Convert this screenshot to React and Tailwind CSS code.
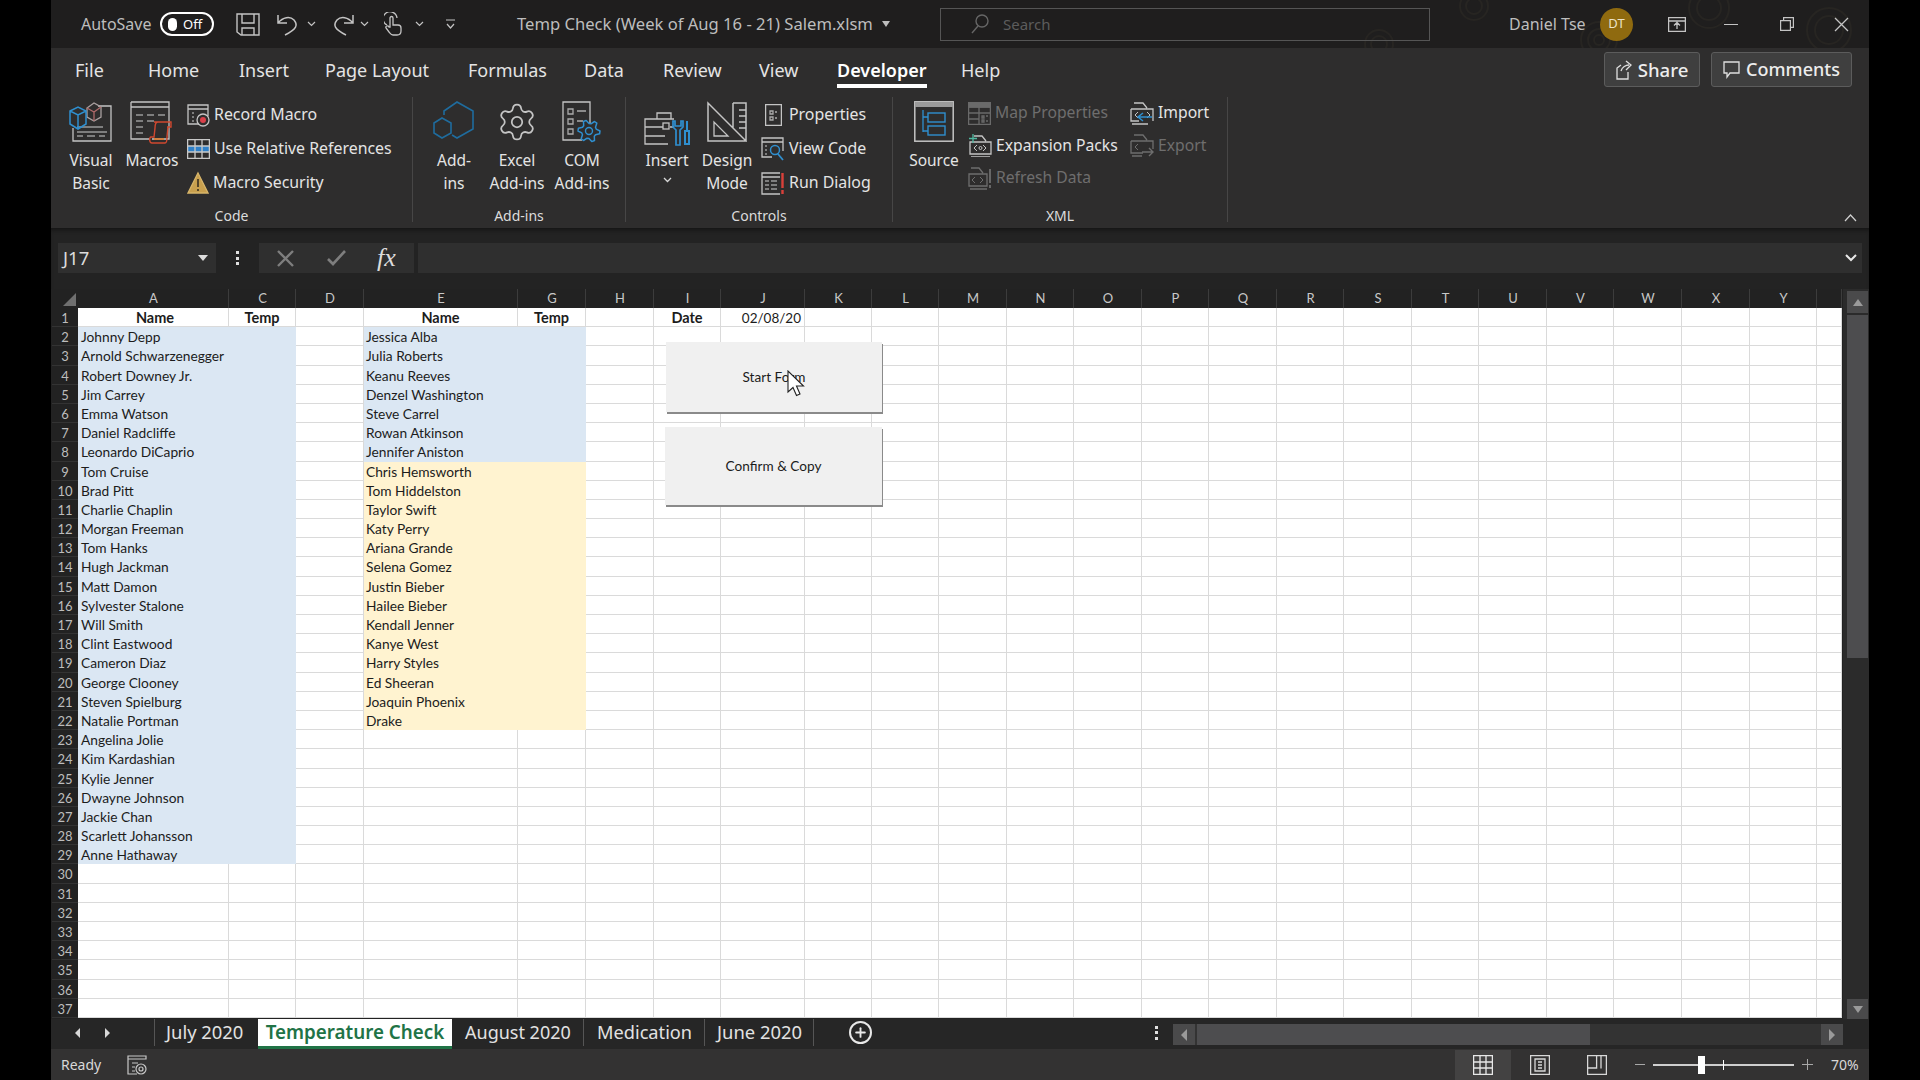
import React from 'react';
import { Settings, Plus } from 'lucide-react';

const UI = { fontFamily: '"Noto Sans", "Open Sans", sans-serif' };
const CELL = { fontFamily: 'Lato, "Liberation Sans", sans-serif' };

// gear outline, used for the small blue gear on COM Add-ins
function gearPath(cx, cy, r1, r2, teeth) {
  const pts = [];
  for (let i = 0; i < teeth * 4; i++) {
    const a = (i / (teeth * 4)) * Math.PI * 2;
    const r = i % 4 === 0 || i % 4 === 1 ? r2 : r1;
    pts.push(`${(cx + r * Math.cos(a)).toFixed(1)} ${(cy + r * Math.sin(a)).toFixed(1)}`);
  }
  return 'M' + pts.join('L') + 'Z';
}

const G = '#c4c4c4';
const B = '#2f8fcf';

function Ic({ w, h, children, className = '' }) {
  return (
    <svg width={w} height={h} viewBox={`0 0 ${w} ${h}`} fill="none" stroke={G} strokeWidth="1.3" className={'shrink-0 ' + className}>
      {children}
    </svg>
  );
}

const icons = {
  visualBasic: (
    <Ic w={44} h={42}>
      <path d="M29 5h13v35H4V27" />
      <path d="M8 26h14M22 26h12M8 31h30M8 35h6M18 35h8M30 35h6" stroke="#999" />
      <path d="M18 7l7-5 7 4v10l-7 4-7-4z" stroke="#a9a0a0" />
      <path d="M18 7l7 4 7-5M25 11v9" stroke="#b06a6a" />
      <path d="M1 10l8-4 8 4v13l-8 5-8-5z M1 10l8 4 8-4 M9 14v14" stroke={B} strokeWidth="1.5" />
    </Ic>
  ),
  macros: (
    <Ic w={44} h={43}>
      <path d="M1 1h38v37H22M1 1v37h18M1 6h38" />
      <path d="M6 14h7M17 14h7M28 14h7M6 20h7M17 20h7M6 26h7M6 32h7" stroke="#999" />
      <path d="M24 21h17v5h-4M28 21c-3 0-3 4-3 6l-1 9h-3c-2 0-2 6 1 6h13c2 0 2-5 2-6l1-10" stroke="#d0482f" strokeWidth="1.4" />
      <path d="M24 38h10" stroke="#d08040" strokeWidth="2" />
    </Ic>
  ),
  record: (
    <Ic w={23} h={23}>
      <path d="M12 20H1V1h20v11M1 5h20" />
      <path d="M5 9h2M5 13h2M5 17h2" stroke="#999" />
      <circle cx="16" cy="16" r="6" />
      <circle cx="16" cy="16" r="3" fill="#d9404a" stroke="none" />
    </Ic>
  ),
  relative: (
    <Ic w={23} h={20}>
      <rect x="0.5" y="7" width="22" height="6" fill="#2f80c8" stroke="none" />
      <path d="M.6.6h21.8v18.8H.6zM.6 7h21.8M.6 13h21.8M8 .6v18.8M15 .6v18.8" stroke="#c9c9c9" />
    </Ic>
  ),
  warning: (
    <Ic w={22} h={24}>
      <path d="M11 2L21 22H1z" fill="#c9a04e" stroke="#d8b56a" />
      <path d="M11 8v8M11 18v2" stroke="#3a3020" strokeWidth="1.6" />
    </Ic>
  ),
  addins: (
    <Ic w={42} h={38}>
      <path d="M11 14V10L24 1l16 9v18l-16 9-5-3" stroke="#1f6c9e" strokeWidth="1.6" />
      <path d="M9 17l9 5v10l-9 5-8-5V22z" stroke="#1f6c9e" strokeWidth="1.6" />
    </Ic>
  ),
  com: (
    <Ic w={40} h={42}>
      <path d="M28 22V1H1v38h19" />
      <path d="M6 8h5v5H6zM6 18h5v5H6zM6 28h5v5H6zM15 10h9M15 20h6" stroke="#aaa" />
      <path d={gearPath(27, 30, 7.5, 11, 6)} stroke={B} strokeWidth="1.5" strokeLinejoin="round" />
      <circle cx="27" cy="30" r="3.5" stroke={B} strokeWidth="1.4" />
    </Ic>
  ),
  insert: (
    <Ic w={46} h={38}>
      <path d="M30 11H1v17h20M1 19h18M26 19h4M13 11V5h14v6M1 28v8h23" />
      <rect x="19" y="15" width="6" height="6" />
      <path d="M29 13v6l3 3v15h4V22l3-3v-6l-2 0v5h-6v-5z" stroke={B} strokeWidth="1.7" />
      <path d="M43 13v10M41 23h4v13h-4z" stroke={B} strokeWidth="2" />
    </Ic>
  ),
  design: (
    <Ic w={40} h={41}>
      <path d="M1 2v38h38zM26 2h13v38M26 2v25" strokeWidth="1.5" />
      <path d="M7 21v14h14zM32 9h7M32 15h7M32 21h7M32 27h7" />
    </Ic>
  ),
  props: (
    <Ic w={17} h={22} className="mr-[3px]">
      <rect x=".6" y=".6" width="15.8" height="20.8" />
      <path d="M5 7h3v3H5zM5 13h3v3H5zM10 8h2M10 14h2" stroke="#aaa" />
    </Ic>
  ),
  viewCode: (
    <Ic w={24} h={24}>
      <path d="M11 20H1V1h21v13M1 5h21" />
      <path d="M4 9h2M4 13h2M4 17h2" stroke="#999" />
      <circle cx="14" cy="13" r="4.5" stroke={B} strokeWidth="1.5" />
      <path d="M17 17l5 6" stroke={B} strokeWidth="1.8" />
    </Ic>
  ),
  runDialog: (
    <Ic w={24} h={23}>
      <path d="M19 22H1V1h18M1 5h18" />
      <path d="M4 9h4M10 9h6M4 13h4M10 13h6M4 17h4M10 17h6" stroke="#999" />
      <path d="M21.5 1v15M21.5 18v4" stroke="#d9403a" strokeWidth="2.4" />
    </Ic>
  ),
  source: (
    <Ic w={40} h={41}>
      <rect x=".8" y=".8" width="38.4" height="39.4" strokeWidth="1.5" />
      <rect x="1" y="1" width="38" height="5" fill="#9a9a9a" stroke="none" />
      <path d="M9 9v22M9 16h5M9 30h5" stroke={B} />
      <rect x="14" y="12" width="17" height="9" stroke={B} strokeWidth="1.4" />
      <rect x="14" y="25" width="17" height="9" stroke={B} strokeWidth="1.4" />
    </Ic>
  ),
  mapProps: (
    <Ic w={23} h={23}>
      <g stroke="#6a6a6a">
        <path d="M.6.6h21.8v21.8H.6zM.6 5h21.8M.6 11h21.8M.6 17h10M11 5v17" />
        <path d="M14 14h2v2h-2zM14 18h2v2h-2zM18 14h2M18 19h2" />
        <rect x="1" y="1" width="21" height="4" fill="#6a6a6a" />
      </g>
    </Ic>
  ),
  expansion: (
    <Ic w={24} h={23}>
      <path d="M6 2h8l4 5M2 8h21v12H2zM3 23h19" />
      <path d="M9 11l-3 3 3 3M15 11l3 3-3 3" strokeWidth="1" />
      <circle cx="12.5" cy="14" r="1.5" strokeWidth="1" />
      <path d="M5 0v9M1 4.5h8" stroke="#4fb8a0" />
    </Ic>
  ),
  refresh: (
    <Ic w={24} h={24}>
      <g stroke="#6e6e6e">
        <path d="M3 2h8l4 5M1 8h18v12H1zM2 23h17" />
        <path d="M7 11l-3 3 3 3M12 11l3 3-3 3" strokeWidth="1" />
        <path d="M22 3v14M22 19v3" strokeWidth="1.8" />
      </g>
    </Ic>
  ),
  importIc: (
    <Ic w={24} h={23}>
      <path d="M4 1h9l4 5M1 7h22v12M1 7v12h8M2 22h16" />
      <path d="M8 10l-3 3 3 3M17 10l3 3-3 3" strokeWidth="1" />
      <path d="M22 15H9M13 11l-5 4 5 4" stroke={B} strokeWidth="1.5" />
    </Ic>
  ),
  exportIc: (
    <Ic w={24} h={23}>
      <g stroke="#6e6e6e">
        <path d="M4 1h9l4 5M1 7h22v8M1 7v12h12M2 22h10" />
        <path d="M8 10l-3 3 3 3" strokeWidth="1" />
        <path d="M12 18h11M19 14l4 4-4 4" strokeWidth="1.4" />
      </g>
    </Ic>
  ),
};

function LargeBtn({ icon, lines, width }) {
  return (
    <div className={'flex flex-col items-center shrink-0 ' + width}>
      <div className="h-[52px] pt-[4px] flex justify-center items-start">{icon}</div>
      {lines.map((l, i) => (
        <div key={i} className="h-[23px] leading-[23px] text-[15.5px] text-[#e4e4e4] whitespace-nowrap">{l}</div>
      ))}
    </div>
  );
}

function SmallBtn({ icon, label, dim, rowClass = 'h-[34px] text-[15.9px]' }) {
  return (
    <div className={'flex items-center gap-[4px] whitespace-nowrap ' + rowClass}>
      {icon}
      <span className={dim ? 'text-[#6e6e6e]' : 'text-[#e4e4e4]'}>{label}</span>
    </div>
  );
}

function Group({ width, label, children }) {
  return (
    <div className={'h-[125px] shrink-0 border-r border-[#474646] flex flex-col ' + width}>
      <div className="h-[109px] shrink-0 flex">{children}</div>
      <div className="h-[20px] shrink-0 leading-[20px] text-center text-[14px] text-[#dcdcdc]">{label}</div>
    </div>
  );
}

function TitleBar() {
  return (
    <div className="relative h-[48px] shrink-0 bg-[#1f1e1e] flex items-center text-[#bdbdbd] overflow-hidden">
      <svg className="absolute right-0 top-0" width="560" height="48" fill="none" stroke="#272522" strokeWidth="2">
        <circle cx="70" cy="44" r="14" /><circle cx="70" cy="44" r="8" />
        <circle cx="165" cy="6" r="14" /><circle cx="165" cy="6" r="8" />
        <circle cx="290" cy="40" r="18" /><circle cx="290" cy="40" r="11" /><circle cx="290" cy="40" r="5" />
        <circle cx="400" cy="8" r="20" /><circle cx="400" cy="8" r="12" />
        <circle cx="520" cy="30" r="22" /><circle cx="520" cy="30" r="14" />
      </svg>
      <span className="ml-[30px] w-[79px] text-[16px] shrink-0">AutoSave</span>
      <div className="w-[54px] h-[24px] rounded-full border-2 border-white flex items-center pl-[6px] gap-[6px] shrink-0">
        <span className="w-[9px] h-[13px] rounded-full bg-white" />
        <span className="text-[13px] text-white leading-none">Off</span>
      </div>
      <svg className="ml-[22px] shrink-0" width="24" height="23" fill="none" stroke={G} strokeWidth="1.4">
        <path d="M1 1h22v21H5l-4-3zM6 1v9h12V1M6 22v-7h12v7" />
      </svg>
      <svg className="ml-[17px] shrink-0" width="22" height="23" fill="none" stroke={G} strokeWidth="1.5">
        <path d="M1 2v8h9M1 10C6 4 13 3 17 7c4 5 3 9-9 15" />
      </svg>
      <svg className="ml-[8px] shrink-0" width="9" height="6" fill="none" stroke={G} strokeWidth="1.2"><path d="M1 1l3.5 3.5L8 1" /></svg>
      <svg className="ml-[16px] shrink-0" width="22" height="23" fill="none" stroke={G} strokeWidth="1.5">
        <path d="M21 2v8h-9M21 10C16 4 9 3 5 7c-4 5-3 9 9 15" />
      </svg>
      <svg className="ml-[6px] shrink-0" width="9" height="6" fill="none" stroke={G} strokeWidth="1.2"><path d="M1 1l3.5 3.5L8 1" /></svg>
      <svg className="ml-[15px] shrink-0" width="18" height="24" fill="none" stroke={G} strokeWidth="1.3">
        <path d="M3 13A7 7 0 1 1 13 6" />
        <path d="M6 15V6a1.5 1.5 0 0 1 3 0v7h5c2 0 3 1 3 3v3c0 3-2 4-4 4H9c-2 0-3-2-4-3l-3-4c-1-2 2-3 3-1z" />
      </svg>
      <svg className="ml-[13px] shrink-0" width="9" height="6" fill="none" stroke={G} strokeWidth="1.2"><path d="M1 1l3.5 3.5L8 1" /></svg>
      <svg className="ml-[21px] shrink-0" width="11" height="11" fill="none" stroke={G} strokeWidth="1.2"><path d="M1 1h9M2 5l3.5 4L9 5" /></svg>
      <span className="ml-[61px] w-[359px] text-[16.6px] whitespace-nowrap shrink-0">Temp Check (Week of Aug 16 - 21) Salem.xlsm</span>
      <span className="ml-[6px] w-0 h-0 border-x-[4px] border-x-transparent border-t-[6px] border-t-[#bdbdbd] shrink-0" />
      <div className="relative ml-[50px] w-[490px] h-[33px] border border-[#555] flex items-center shrink-0">
        <svg className="ml-[30px]" width="18" height="20" fill="none" stroke="#666" strokeWidth="1.4">
          <circle cx="11" cy="7" r="6" /><path d="M7 12l-6 7" />
        </svg>
        <span className="ml-[14px] text-[15px] text-[#5c5c5c]">Search</span>
      </div>
      <span className="relative ml-[79px] w-[91px] text-[16px] whitespace-nowrap shrink-0">Daniel Tse</span>
      <div className="relative w-[33px] h-[33px] rounded-full bg-[#8f6a0f] flex items-center justify-center text-[13px] text-[#ece3c8] shrink-0">DT</div>
      <svg className="relative ml-[35px] shrink-0" width="18" height="15" fill="none" stroke={G} strokeWidth="1.3">
        <path d="M.6.6h16.8v13.8H.6zM.6 4h16.8M9 12V6M6 8.5L9 5.5l3 3" />
      </svg>
      <span className="relative ml-[38px] w-[14px] h-[1px] bg-[#c4c4c4] shrink-0" />
      <svg className="relative ml-[42px] shrink-0" width="14" height="14" fill="none" stroke={G} strokeWidth="1.2">
        <path d="M.6 3.6h9.8v9.8H.6zM3.6 3.6V.6h9.8v9.8h-3" />
      </svg>
      <svg className="relative ml-[40px] shrink-0" width="15" height="15" fill="none" stroke={G} strokeWidth="1.3">
        <path d="M1 1l13 13M14 1L1 14" />
      </svg>
    </div>
  );
}

const tabs = [
  ['File', 'w-[73px]'], ['Home', 'w-[91px]'], ['Insert', 'w-[86px]'], ['Page Layout', 'w-[143px]'], ['Formulas', 'w-[116px]'],
  ['Data', 'w-[79px]'], ['Review', 'w-[96px]'], ['View', 'w-[78px]'], ['Developer', 'w-[124px]'], ['Help', 'w-[60px]'],
];

function TabRow() {
  return (
    <div className="relative h-[49px] shrink-0 flex items-start pl-[24px] pt-[10px]">
      {tabs.map(([t, w]) => (
        <div key={t} className={'shrink-0 ' + w}>
          {t === 'Developer' ? (
            <span className="inline-block h-[30px] leading-[25px] text-[18px] font-semibold text-white border-b-[4px] border-white">{t}</span>
          ) : (
            <span className="inline-block leading-[25px] text-[18px] text-[#e4e4e4]">{t}</span>
          )}
        </div>
      ))}
      <div className="absolute right-[17px] top-[4px] flex gap-[11px]">
        <div className="w-[96px] h-[35px] rounded-[3px] border border-[#5c5c5c] bg-[#3f3f3f] flex items-center justify-center gap-[5px] text-[18.6px] font-medium text-[#ededed]">
          <svg width="17" height="20" fill="none" stroke="#e0e0e0" strokeWidth="1.3"><path d="M5 11c1-4 5-6 8-6M10 1l5 4-5 5M12 12v7H1V8l4-3" /></svg>
          Share
        </div>
        <div className="w-[141px] h-[35px] rounded-[3px] border border-[#5c5c5c] bg-[#3f3f3f] flex items-center justify-center gap-[6px] text-[18px] font-medium text-[#ededed]">
          <svg width="17" height="18" fill="none" stroke="#e0e0e0" strokeWidth="1.3"><path d="M1 1h15v11H7l-3 4v-4H1z" /></svg>
          Comments
        </div>
      </div>
    </div>
  );
}

function Ribbon() {
  return (
    <div className="relative h-[131px] shrink-0 flex">
      <Group width="w-[362px]" label="Code">
        <div className="w-[11px] shrink-0" />
        <LargeBtn width="w-[58px]" icon={icons.visualBasic} lines={['Visual', 'Basic']} />
        <LargeBtn width="w-[64px]" icon={icons.macros} lines={['Macros']} />
        <div className="pl-[3px] pt-px">
          <SmallBtn icon={icons.record} label="Record Macro" />
          <SmallBtn icon={icons.relative} label="Use Relative References" />
          <SmallBtn icon={icons.warning} label="Macro Security" />
        </div>
      </Group>
      <Group width="w-[213px]" label="Add-ins">
        <div className="w-[12px] shrink-0" />
        <LargeBtn width="w-[58px]" icon={icons.addins} lines={['Add-', 'ins']} />
        <LargeBtn width="w-[68px]" icon={<Settings size={42} strokeWidth={1} color={G} />} lines={['Excel', 'Add-ins']} />
        <LargeBtn width="w-[62px]" icon={icons.com} lines={['COM', 'Add-ins']} />
      </Group>
      <Group width="w-[267px]" label="Controls">
        <div className="w-[14px] shrink-0" />
        <LargeBtn
          width="w-[54px]"
          icon={<div className="pt-[7px]">{icons.insert}</div>}
          lines={['Insert', <svg key="c" className="mt-[5px]" width="9" height="6" fill="none" stroke="#d8d8d8" strokeWidth="1.3"><path d="M1 1l3.5 3.5L8 1" /></svg>]}
        />
        <LargeBtn width="w-[66px]" icon={icons.design} lines={['Design', 'Mode']} />
        <div className="pl-px pt-px">
          <SmallBtn icon={icons.props} label="Properties" rowClass="h-[34px] pl-[4px] text-[15.9px]" />
          <SmallBtn icon={icons.viewCode} label="View Code" />
          <SmallBtn icon={icons.runDialog} label="Run Dialog" />
        </div>
      </Group>
      <Group width="w-[335px]" label="XML">
        <div className="w-[12px] shrink-0" />
        <LargeBtn width="w-[58px]" icon={icons.source} lines={['Source']} />
        <div className="pl-[5px] w-[167px] shrink-0">
          <SmallBtn rowClass="h-[32.5px] text-[15.7px]" icon={icons.mapProps} label="Map Properties" dim />
          <SmallBtn rowClass="h-[32.5px] text-[15.7px]" icon={icons.expansion} label="Expansion Packs" />
          <SmallBtn rowClass="h-[32.5px] text-[15.7px]" icon={icons.refresh} label="Refresh Data" dim />
        </div>
        <div>
          <SmallBtn rowClass="h-[32.5px] text-[15.7px]" icon={icons.importIc} label="Import" />
          <SmallBtn rowClass="h-[32.5px] text-[15.7px]" icon={icons.exportIc} label="Export" dim />
        </div>
      </Group>
      <svg className="absolute right-[12px] top-[117px]" width="13" height="8" fill="none" stroke="#d0d0d0" strokeWidth="1.2">
        <path d="M1 7l5.5-6L12 7" />
      </svg>
    </div>
  );
}

function FormulaBar() {
  return (
    <div className="h-[61px] shrink-0 bg-[#232323] shadow-[inset_0_4px_4px_-2px_#151515] pt-[15px] pl-[7px] flex items-start">
      <div className="w-[158px] h-[30px] bg-[#2f2f2f] flex items-center justify-between pl-[5px] pr-[8px] shrink-0">
        <span className="text-[18.5px] text-[#dcdcdc]">J17</span>
        <span className="w-0 h-0 border-x-[5px] border-x-transparent border-t-[6px] border-t-[#dcdcdc]" />
      </div>
      <div className="w-[43px] h-[30px] flex flex-col items-center justify-center gap-[2.5px] shrink-0">
        <span className="w-[3px] h-[3px] bg-[#e0e0e0]" /><span className="w-[3px] h-[3px] bg-[#e0e0e0]" /><span className="w-[3px] h-[3px] bg-[#e0e0e0]" />
      </div>
      <div className="w-[155px] h-[30px] bg-[#2f2f2f] flex items-center pl-[18px] shrink-0">
        <svg width="17" height="17" fill="none" stroke="#7e7e7e" strokeWidth="2.4"><path d="M1 1l15 15M16 1L1 16" /></svg>
        <svg className="ml-[33px]" width="19" height="16" fill="none" stroke="#7e7e7e" strokeWidth="2.6"><path d="M1 9l5 5L18 1" /></svg>
        <span className="ml-[31px] text-[26px] italic text-[#dcdcdc] leading-none" style={{ fontFamily: '"Liberation Serif", serif' }}>fx</span>
      </div>
      <div className="ml-[4px] w-[1444px] h-[30px] bg-[#2f2f2f] flex items-center justify-end pr-[5px] shrink-0">
        <svg width="12" height="8" fill="none" stroke="#e8e8e8" strokeWidth="2"><path d="M1 1l5 5 5-5" /></svg>
      </div>
    </div>
  );
}

const colA = ['Johnny Depp', 'Arnold Schwarzenegger', 'Robert Downey Jr.', 'Jim Carrey', 'Emma Watson', 'Daniel Radcliffe', 'Leonardo DiCaprio', 'Tom Cruise', 'Brad Pitt', 'Charlie Chaplin', 'Morgan Freeman', 'Tom Hanks', 'Hugh Jackman', 'Matt Damon', 'Sylvester Stalone', 'Will Smith', 'Clint Eastwood', 'Cameron Diaz', 'George Clooney', 'Steven Spielburg', 'Natalie Portman', 'Angelina Jolie', 'Kim Kardashian', 'Kylie Jenner', 'Dwayne Johnson', 'Jackie Chan', 'Scarlett Johansson', 'Anne Hathaway'];
const colE = ['Jessica Alba', 'Julia Roberts', 'Keanu Reeves', 'Denzel Washington', 'Steve Carrel', 'Rowan Atkinson', 'Jennifer Aniston', 'Chris Hemsworth', 'Tom Hiddelston', 'Taylor Swift', 'Katy Perry', 'Ariana Grande', 'Selena Gomez', 'Justin Bieber', 'Hailee Bieber', 'Kendall Jenner', 'Kanye West', 'Harry Styles', 'Ed Sheeran', 'Joaquin Phoenix', 'Drake'];
const columns = ['A', 'C', 'D', 'E', 'G', 'H', 'I', 'J', 'K', 'L', 'M', 'N', 'O', 'P', 'Q', 'R', 'S', 'T', 'U', 'V', 'W', 'X', 'Y', ''];
const rows = Array.from({ length: 37 }, (_, i) => i + 1);

function fillFor(col, r) {
  if ((col === 'A' || col === 'C') && r >= 2 && r <= 29) return 'bg-[#dbe7f3]';
  if ((col === 'E' || col === 'G') && r >= 2 && r <= 8) return 'bg-[#dbe7f3]';
  if ((col === 'E' || col === 'G') && r >= 9 && r <= 22) return 'bg-[#fff3d0]';
  return 'bg-white border-r border-b border-[#dadada]';
}

function cellContent(col, r) {
  if (r === 1) {
    if (col === 'A') return <span className="block text-center font-bold text-[14.5px] pl-[4px]">Name</span>;
    if (col === 'E') return <span className="block text-center font-bold text-[14.5px]">Name</span>;
    if (col === 'C' || col === 'G') return <span className="block text-center font-bold text-[14.5px]">Temp</span>;
    if (col === 'I') return <span className="block text-center font-bold text-[14.5px]">Date</span>;
    if (col === 'J') return <span className="block text-right pr-[3px] text-[13.5px]">02/08/20</span>;
    return null;
  }
  if (col === 'A') return <span className="pl-[3px]">{colA[r - 2]}</span>;
  if (col === 'E') return <span className="pl-[2px]">{colE[r - 2]}</span>;
  return null;
}

function Sheet() {
  return (
    <div className="relative w-[1791px] ml-px shrink-0 bg-[#222222]" style={CELL}>
      <div className="grid grid-cols-[26px_151px_67px_68px_154px_68px_68px_67px_84px_67px_67px_68px_67px_68px_67px_68px_67px_68px_67px_68px_67px_68px_68px_67px_25px] grid-rows-[19px_repeat(37,19.19px)]">
        <div className="flex items-end justify-end pr-[2px] pb-[2px]">
          <span className="w-0 h-0 border-b-[13px] border-b-[#6f6f6f] border-l-[13px] border-l-transparent" />
        </div>
        {columns.map((c, i) => (
          <div key={i} className="border-r border-[#3c3c3c] pl-px text-center text-[13px] leading-[19px] text-[#c8c8c8]">{c}</div>
        ))}
        {rows.map(r => (
          <React.Fragment key={r}>
            <div className="text-center text-[13px] leading-[20px] text-[#bdbdbd] border-b border-[#333]">{r}</div>
            {columns.map(c => (
              <div key={c} className={'text-[13.75px] leading-[20px] text-[#1c1c1c] whitespace-nowrap overflow-visible ' + fillFor(c, r)}>
                {cellContent(c, r)}
              </div>
            ))}
          </React.Fragment>
        ))}
      </div>
      <div className="absolute left-[614px] top-[53px] w-[216px] h-[70px] bg-[#f0f0f0] shadow-[1px_2px_0_#8a8a8a] flex items-center justify-center text-[13.6px] text-[#1c1c1c]">Start Form</div>
      <div className="absolute left-[613px] top-[138px] w-[217px] h-[78px] bg-[#f0f0f0] shadow-[1px_2px_0_#8a8a8a] flex items-center justify-center text-[13.6px] text-[#1c1c1c]">Confirm &amp; Copy</div>
      <svg className="absolute left-[735px] top-[81px]" width="20" height="28" fill="#fff" stroke="#222" strokeWidth="1.1">
        <path d="M1 1v21l5-4.5 3.5 8 3.5-1.5-3.5-8h7z" />
      </svg>
    </div>
  );
}

function VScroll() {
  return (
    <div className="w-[26px] shrink-0 bg-[#2b2b2b] flex flex-col items-center pt-[2px] pl-[3px]">
      <div className="w-[21px] h-[22px] bg-[#4a4a4b] flex items-center justify-center shrink-0">
        <span className="w-0 h-0 border-x-[5px] border-x-transparent border-b-[7px] border-b-[#9a9a9a]" />
      </div>
      <div className="w-[21px] h-[343px] mt-[2px] bg-[#4d4d4f] shrink-0" />
      <div className="w-[21px] h-[20px] mt-auto bg-[#4a4a4b] flex items-center justify-center shrink-0">
        <span className="w-0 h-0 border-x-[5px] border-x-transparent border-t-[7px] border-t-[#9a9a9a]" />
      </div>
    </div>
  );
}

function SheetTabs() {
  return (
    <div className="h-[30px] shrink-0 bg-[#262626] flex items-start text-[#e2e2e2]">
      <div className="w-[103px] h-[27px] flex items-center pl-[24px] gap-[25px] shrink-0">
        <span className="w-0 h-0 border-y-[5px] border-y-transparent border-r-[5px] border-r-[#d8d8d8]" />
        <span className="w-0 h-0 border-y-[5px] border-y-transparent border-l-[5px] border-l-[#d8d8d8]" />
      </div>
      <div className="w-[104px] h-[27px] border-l border-[#555] pl-[11px] text-[18.4px] leading-[26px] shrink-0">July 2020</div>
      <div className="w-[194px] h-[30px] bg-white border-b-[3px] border-[#217346] text-center text-[18.8px] leading-[27px] font-semibold text-[#217346] shrink-0 whitespace-nowrap">Temperature Check</div>
      <div className="w-[132px] h-[27px] border-r border-[#555] pl-[13px] text-[18px] leading-[27px] shrink-0">August 2020</div>
      <div className="w-[121px] h-[27px] border-r border-[#555] pl-[13px] text-[18.2px] leading-[27px] shrink-0">Medication</div>
      <div className="w-[109px] h-[27px] border-r border-[#555] pl-[12px] text-[18.4px] leading-[26px] shrink-0">June 2020</div>
      <div className="ml-[35px] mt-[2px] w-[23px] h-[23px] rounded-full border-2 border-[#e8e8e8] flex items-center justify-center shrink-0">
        <Plus size={15} strokeWidth={3} color="#e8e8e8" />
      </div>
      <div className="ml-[283px] h-[27px] flex flex-col items-center justify-center gap-[2.5px] shrink-0">
        <span className="w-[3px] h-[3px] bg-[#e0e0e0]" /><span className="w-[3px] h-[3px] bg-[#e0e0e0]" /><span className="w-[3px] h-[3px] bg-[#e0e0e0]" />
      </div>
      <div className="ml-[15px] mt-[5px] w-[670px] h-[21px] bg-[#333] flex shrink-0">
        <div className="w-[22px] bg-[#4a4a4b] flex items-center justify-center shrink-0">
          <span className="w-0 h-0 border-y-[6px] border-y-transparent border-r-[6px] border-r-[#9a9a9a]" />
        </div>
        <div className="ml-[2px] w-[393px] bg-[#4d4d4f] shrink-0" />
        <div className="ml-auto w-[22px] bg-[#4a4a4b] flex items-center justify-center shrink-0">
          <span className="w-0 h-0 border-y-[6px] border-y-transparent border-l-[6px] border-l-[#9a9a9a]" />
        </div>
      </div>
    </div>
  );
}

function StatusBar() {
  return (
    <div className="h-[31px] shrink-0 bg-[#333232] flex items-center text-[#d8d8d8]">
      <span className="ml-[10px] w-[66px] text-[14px] shrink-0">Ready</span>
      <svg className="shrink-0" width="21" height="20" fill="none" stroke="#c8c8c8" strokeWidth="1.2">
        <path d="M1 1h18v3H1zM1 4v15h9M5 8h6M5 12h3M5 16h3" /><circle cx="14" cy="14" r="5" /><circle cx="14" cy="14" r="2" />
      </svg>
      <div className="ml-[1307px] w-[56px] h-[30px] self-end bg-[#434242] flex items-center justify-center shrink-0">
        <svg width="20" height="20" fill="none" stroke="#e8e8e8" strokeWidth="1.3">
          <path d="M.6.6h18.8v18.8H.6zM.6 7h18.8M.6 13h18.8M7 .6v18.8M13 .6v18.8" />
        </svg>
      </div>
      <svg className="ml-[19px] shrink-0" width="20" height="20" fill="none" stroke="#d8d8d8" strokeWidth="1.3">
        <path d="M.6.6h18.8v18.8H.6zM5 4h10v12H5zM8 7h4M8 10h4M8 13h4" />
      </svg>
      <svg className="ml-[37px] shrink-0" width="20" height="20" fill="none" stroke="#d8d8d8" strokeWidth="1.3">
        <path d="M.6.6h18.8v18.8H.6zM.6 13h9V.6M14 .6v13" />
      </svg>
      <span className="ml-[28px] w-[10px] h-px bg-[#a8a8a8] shrink-0" />
      <div className="relative ml-[8px] w-[141px] h-[2px] bg-[#cfcfcf] shrink-0">
        <span className="absolute left-[45px] top-[-8px] w-[7px] h-[18px] bg-white" />
        <span className="absolute left-[70px] top-[-4px] w-px h-[10px] bg-white" />
      </div>
      <div className="relative ml-[8px] w-[11px] h-[11px] shrink-0">
        <span className="absolute left-0 top-[5px] w-[11px] h-px bg-[#a8a8a8]" />
        <span className="absolute left-[5px] top-0 w-px h-[11px] bg-[#a8a8a8]" />
      </div>
      <span className="ml-[18px] text-[14px] shrink-0">70%</span>
    </div>
  );
}

export default function App() {
  return (
    <div className="w-[1920px] h-[1080px] bg-black pl-[51px] overflow-hidden" style={UI}>
      <div className="w-[1818px] h-full flex flex-col bg-[#2e2d2d]">
        <TitleBar />
        <TabRow />
        <Ribbon />
        <FormulaBar />
        <div className="flex h-[730px] shrink-0 bg-[#222222]">
          <Sheet />
          <VScroll />
        </div>
        <SheetTabs />
        <StatusBar />
      </div>
    </div>
  );
}
